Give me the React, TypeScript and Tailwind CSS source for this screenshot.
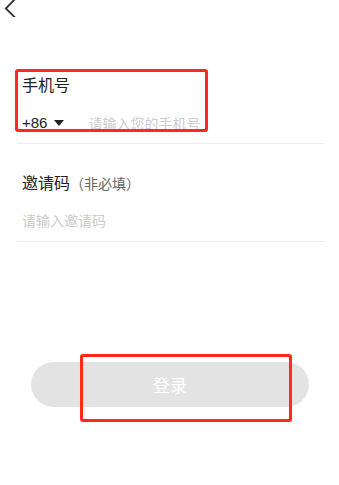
import React from "react";

export default function App() {
  const font = { fontFamily: '"Noto Sans CJK SC", "Noto Sans", sans-serif' };
  return (
    <div className="relative w-[339px] h-[485px] bg-white overflow-hidden" style={font}>
      <svg className="block ml-[4px]" width="12" height="17" viewBox="0 0 12 17" fill="none">
        <path d="M10.5 -0.5 L1.8 8.5 L10.5 17" stroke="#333" strokeWidth="1.8" strokeLinecap="square" />
      </svg>

      <div className="ml-[17px] w-[307px]">
        <div className="mt-[55px] pl-[5px] h-[24px] leading-[24px] text-[16px] text-[#222]">手机号</div>
        <div className="mt-[15px] pl-[5px] h-[24px] flex items-center">
          <span className="text-[15px] leading-[24px] text-[#222]" style={{ fontFamily: '"Liberation Sans", Arial, sans-serif' }}>+86</span>
          <span className="ml-[7px] w-0 h-0 border-l-[5px] border-r-[5px] border-t-[6px] border-l-transparent border-r-transparent border-t-[#222]"></span>
          <span className="ml-[24px] text-[14px] leading-[24px] text-[#cccccc]">请输入您的手机号</span>
        </div>
        <div className="mt-[8px] h-px bg-[#ececec]"></div>

        <div className="mt-[26px] pl-[5px] h-[24px] leading-[24px] flex items-baseline">
          <span className="text-[16px] text-[#222]">邀请码</span>
          <span className="text-[14px] text-[#666]">（非必填）</span>
        </div>
        <div className="mt-[14px] pl-[5px] h-[24px] leading-[24px] text-[14px] text-[#cccccc]">请输入邀请码</div>
        <div className="mt-[9px] h-px bg-[#ececec]"></div>
      </div>

      <div className="mt-[120px] ml-[31px] w-[278px] h-[45px] rounded-full bg-[#e3e3e3] flex items-center justify-center text-[17px] text-white">
        登录
      </div>

      <div className="absolute left-[15px] top-[69px] w-[193px] h-[63px] border-[3px] border-[#ff2a1a] rounded-[3px]"></div>
      <div className="absolute left-[80px] top-[354px] w-[212px] h-[68px] border-[3px] border-[#ff2a1a] rounded-[3px]"></div>
    </div>
  );
}
